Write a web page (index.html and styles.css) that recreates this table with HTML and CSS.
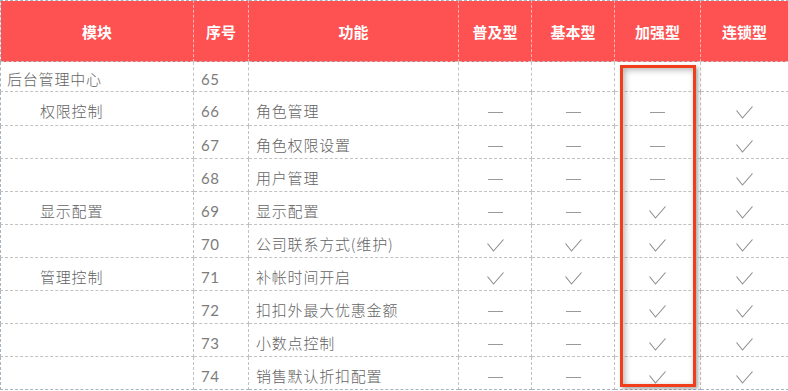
FILE: index.html
```html
<!DOCTYPE html>
<html lang="zh-CN">
<head>
<meta charset="utf-8">
<title>功能对比</title>
<link rel="stylesheet" href="styles.css">
</head>
<body>
<div class="wrap">
<table class="grid">
<colgroup>
<col class="c-mod"><col class="c-no"><col class="c-fn"><col class="c-a"><col class="c-b"><col class="c-c"><col class="c-d">
</colgroup>
<thead>
<tr><th>模块</th><th>序号</th><th>功能</th><th>普及型</th><th>基本型</th><th>加强型</th><th>连锁型</th></tr>
</thead>
<tbody>
<tr class="first"><td class="mod">后台管理中心</td><td class="no">65</td><td class="fn"></td><td></td><td></td><td></td><td></td></tr>
<tr class="second"><td class="mod sub">权限控制</td><td class="no">66</td><td class="fn">角色管理</td><td class="m"><i class="dash"></i></td><td class="m"><i class="dash"></i></td><td class="m"><i class="dash"></i></td><td class="m"><svg class="ck" viewBox="0 0 17 13"><polyline points="0.5,4.5 6.5,12 16.5,0.5"/></svg></td></tr>
<tr><td class="mod"></td><td class="no">67</td><td class="fn">角色权限设置</td><td class="m"><i class="dash"></i></td><td class="m"><i class="dash"></i></td><td class="m"><i class="dash"></i></td><td class="m"><svg class="ck" viewBox="0 0 17 13"><polyline points="0.5,4.5 6.5,12 16.5,0.5"/></svg></td></tr>
<tr><td class="mod"></td><td class="no">68</td><td class="fn">用户管理</td><td class="m"><i class="dash"></i></td><td class="m"><i class="dash"></i></td><td class="m"><i class="dash"></i></td><td class="m"><svg class="ck" viewBox="0 0 17 13"><polyline points="0.5,4.5 6.5,12 16.5,0.5"/></svg></td></tr>
<tr><td class="mod sub">显示配置</td><td class="no">69</td><td class="fn">显示配置</td><td class="m"><i class="dash"></i></td><td class="m"><i class="dash"></i></td><td class="m"><svg class="ck" viewBox="0 0 17 13"><polyline points="0.5,4.5 6.5,12 16.5,0.5"/></svg></td><td class="m"><svg class="ck" viewBox="0 0 17 13"><polyline points="0.5,4.5 6.5,12 16.5,0.5"/></svg></td></tr>
<tr><td class="mod"></td><td class="no">70</td><td class="fn">公司联系方式(维护)</td><td class="m"><svg class="ck" viewBox="0 0 17 13"><polyline points="0.5,4.5 6.5,12 16.5,0.5"/></svg></td><td class="m"><svg class="ck" viewBox="0 0 17 13"><polyline points="0.5,4.5 6.5,12 16.5,0.5"/></svg></td><td class="m"><svg class="ck" viewBox="0 0 17 13"><polyline points="0.5,4.5 6.5,12 16.5,0.5"/></svg></td><td class="m"><svg class="ck" viewBox="0 0 17 13"><polyline points="0.5,4.5 6.5,12 16.5,0.5"/></svg></td></tr>
<tr><td class="mod sub">管理控制</td><td class="no">71</td><td class="fn">补帐时间开启</td><td class="m"><svg class="ck" viewBox="0 0 17 13"><polyline points="0.5,4.5 6.5,12 16.5,0.5"/></svg></td><td class="m"><svg class="ck" viewBox="0 0 17 13"><polyline points="0.5,4.5 6.5,12 16.5,0.5"/></svg></td><td class="m"><svg class="ck" viewBox="0 0 17 13"><polyline points="0.5,4.5 6.5,12 16.5,0.5"/></svg></td><td class="m"><svg class="ck" viewBox="0 0 17 13"><polyline points="0.5,4.5 6.5,12 16.5,0.5"/></svg></td></tr>
<tr><td class="mod"></td><td class="no">72</td><td class="fn">扣扣外最大优惠金额</td><td class="m"><i class="dash"></i></td><td class="m"><i class="dash"></i></td><td class="m"><svg class="ck" viewBox="0 0 17 13"><polyline points="0.5,4.5 6.5,12 16.5,0.5"/></svg></td><td class="m"><svg class="ck" viewBox="0 0 17 13"><polyline points="0.5,4.5 6.5,12 16.5,0.5"/></svg></td></tr>
<tr><td class="mod"></td><td class="no">73</td><td class="fn">小数点控制</td><td class="m"><i class="dash"></i></td><td class="m"><i class="dash"></i></td><td class="m"><svg class="ck" viewBox="0 0 17 13"><polyline points="0.5,4.5 6.5,12 16.5,0.5"/></svg></td><td class="m"><svg class="ck" viewBox="0 0 17 13"><polyline points="0.5,4.5 6.5,12 16.5,0.5"/></svg></td></tr>
<tr><td class="mod"></td><td class="no">74</td><td class="fn">销售默认折扣配置</td><td class="m"><i class="dash"></i></td><td class="m"><i class="dash"></i></td><td class="m"><svg class="ck" viewBox="0 0 17 13"><polyline points="0.5,4.5 6.5,12 16.5,0.5"/></svg></td><td class="m"><svg class="ck" viewBox="0 0 17 13"><polyline points="0.5,4.5 6.5,12 16.5,0.5"/></svg></td></tr>
</tbody>
</table>
<div class="mark"></div>
</div>
</body>
</html>
```
FILE: styles.css
```css
html, body {
  margin: 0;
  padding: 0;
  background: #ffffff;
}
.wrap {
  position: relative;
  width: 788px;
}
.grid {
  border-collapse: collapse;
  table-layout: fixed;
  width: 788px;
  font-family: "Noto Sans CJK SC", "Noto Sans", sans-serif;
  border: 1px dashed #a8b4bf;
}
.c-mod { width: 193px; }
.c-no { width: 55px; }
.c-fn { width: 210px; }
.c-a { width: 73px; }
.c-b { width: 83px; }
.c-c { width: 86px; }
.c-d { width: 88px; }
.grid thead tr { height: 61px; }
.grid th {
  padding: 0;
  background: #fe5151;
  color: #ffffff;
  font-size: 15px;
  font-weight: bold;
  text-align: center;
  border-left: 1px dashed #ffb3b3;
  border-right: 1px dashed #ffb3b3;
  border-top: 1px dashed #a8b4bf;
}
.grid th:first-child { border-left: 1px dashed #a8b4bf; }
.grid th:last-child { border-right: 1px dashed #a8b4bf; }
.grid tbody tr { height: 33px; }
.grid tbody tr.first { height: 30px; }
.grid tbody tr.second { height: 34px; }
.grid td {
  padding: 5px 0 0 0;
  border: 1px dashed #c2c2c2;
  color: #646464;
  font-size: 15px;
  font-weight: 300;
  line-height: 20px;
  vertical-align: middle;
  white-space: nowrap;
  letter-spacing: 0.8px;
}
.grid td:first-child { border-left: 1px dashed #a8b4bf; }
.grid td:last-child { border-right: 1px dashed #a8b4bf; }
.grid tbody tr:last-child td { border-bottom: 1px dashed #a8b4bf; }
.grid td.mod { padding-left: 6px; }
.grid td.mod.sub { padding-left: 39px; }
.grid td.no {
  padding-left: 7px;
  font-family: "Lato", "Noto Sans", sans-serif;
  font-size: 15px;
  font-weight: 400;
  letter-spacing: 0.5px;
  color: #7c7c7c;
}
.grid td.fn { padding-left: 7px; }
.grid td.m { text-align: center; letter-spacing: 0; }
.dash {
  display: inline-block;
  width: 15px;
  height: 1px;
  background: #9a9a9a;
  vertical-align: middle;
}
.ck {
  display: inline-block;
  width: 17px;
  height: 13px;
  vertical-align: middle;
  fill: none;
  stroke: #8c8c8c;
  stroke-width: 1.1;
}
.mark {
  position: absolute;
  left: 620px;
  top: 65px;
  width: 70px;
  height: 316px;
  border: 3px solid #f23d1c;
  box-shadow: 2px 2px 4px rgba(0, 0, 0, 0.35), inset 2px 2px 6px rgba(0, 0, 0, 0.3);
}
```
